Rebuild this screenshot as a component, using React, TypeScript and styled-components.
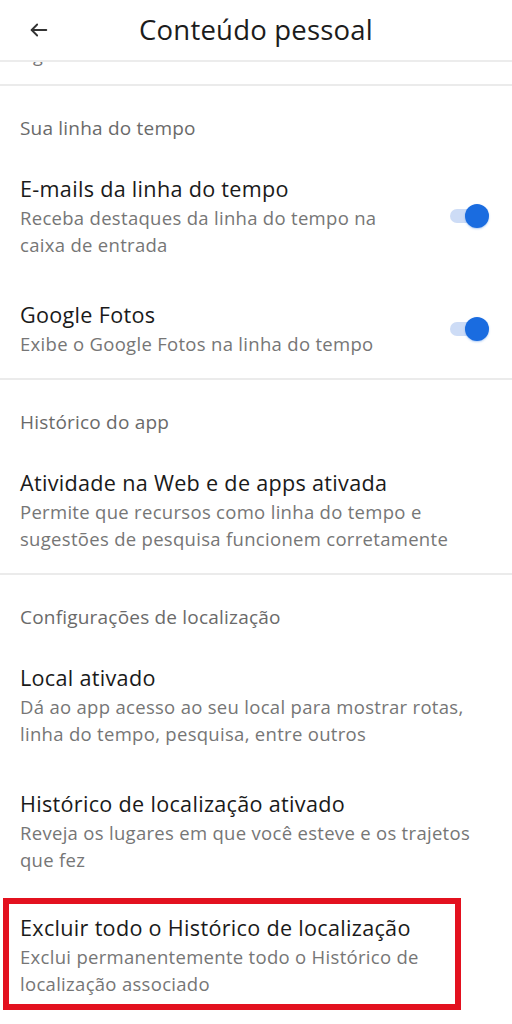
import React from 'react';
import styled, { createGlobalStyle } from 'styled-components';

const GlobalStyle = createGlobalStyle`
  html, body {
    margin: 0;
    padding: 0;
    background: #ffffff;
  }
  body {
    font-family: "Open Sans", "Noto Sans", Arial, sans-serif;
    -webkit-font-smoothing: antialiased;
  }
`;

const Page = styled.div`
  width: 512px;
  min-height: 1024px;
  background: #ffffff;
  overflow: hidden;
`;

const Header = styled.header`
  height: 60px;
  display: grid;
  grid-template-columns: 1fr auto 1fr;
  align-items: center;
  border-bottom: 2px solid #ececec;
`;

const BackButton = styled.button`
  justify-self: start;
  margin-left: 25px;
  width: 28px;
  height: 28px;
  padding: 0;
  border: none;
  background: none;
  display: flex;
  align-items: center;
  justify-content: center;
  color: #333333;
`;

const HeaderTitle = styled.h1`
  margin: 0;
  font-size: 27.5px;
  letter-spacing: 0.2px;
  font-weight: 400;
  color: #1c1c1c;
  line-height: 34px;
`;

const Remnant = styled.div`
  height: 22px;
  overflow: hidden;
`;

const RemnantText = styled.div`
  margin-top: -20px;
  padding-left: 33px;
  font-size: 18px;
  line-height: 27px;
  color: #767676;
`;

const Divider = styled.div`
  height: 2px;
  background: #ebebeb;
`;

const Section = styled.section`
  display: flex;
  flex-direction: column;
`;

const SectionLabel = styled.div`
  padding: 29px 20px 12px;
  font-size: 19px;
  letter-spacing: 0.2px;
  line-height: 26px;
  color: #6a6a6a;
`;

const Item = styled.div<{ $highlight?: boolean }>`
  display: flex;
  align-items: center;
  gap: 16px;
  padding: ${p => (p.$highlight ? '9px 0 7px 11px' : '21px 23px 21px 20px')};
  ${p =>
    p.$highlight &&
    `
    margin: 4px 0 0 3px;
    width: 435px;
    border: 6px solid #e3111f;
  `}
`;

const ItemText = styled.div`
  flex: 1;
  min-width: 0;
`;

const ItemTitle = styled.div`
  font-size: 21.6px;
  letter-spacing: 0.3px;
  line-height: 30px;
  color: #1a1a1a;
  white-space: nowrap;
`;

const ItemSub = styled.div`
  font-size: 18.5px;
  letter-spacing: 0.3px;
  line-height: 27px;
  color: #767676;
  white-space: nowrap;
`;

const Toggle = styled.div`
  position: relative;
  width: 39px;
  height: 24px;
  flex-shrink: 0;
`;

const Track = styled.div`
  position: absolute;
  left: 0;
  top: 5px;
  width: 36px;
  height: 14px;
  border-radius: 7px;
  background: #cddcf6;
`;

const Knob = styled.div`
  position: absolute;
  right: 0;
  top: 0;
  width: 24px;
  height: 24px;
  border-radius: 50%;
  background: #1a6ce0;
  box-shadow: 0 1px 2px rgba(26, 108, 224, 0.35);
`;

const BackArrow = () => (
  <svg width="22" height="22" viewBox="0 0 24 24" fill="none" stroke="currentColor" strokeWidth="2" strokeLinecap="round" strokeLinejoin="round">
    <path d="M20 12H4" />
    <path d="M10 6l-6 6 6 6" />
  </svg>
);

interface Setting {
  title: string;
  lines: string[];
  toggle?: boolean;
  highlight?: boolean;
}

interface Group {
  label: string;
  items: Setting[];
}

const groups: Group[] = [
  {
    label: 'Sua linha do tempo',
    items: [
      {
        title: 'E-mails da linha do tempo',
        lines: ['Receba destaques da linha do tempo na', 'caixa de entrada'],
        toggle: true,
      },
      {
        title: 'Google Fotos',
        lines: ['Exibe o Google Fotos na linha do tempo'],
        toggle: true,
      },
    ],
  },
  {
    label: 'Histórico do app',
    items: [
      {
        title: 'Atividade na Web e de apps ativada',
        lines: ['Permite que recursos como linha do tempo e', 'sugestões de pesquisa funcionem corretamente'],
      },
    ],
  },
  {
    label: 'Configurações de localização',
    items: [
      {
        title: 'Local ativado',
        lines: ['Dá ao app acesso ao seu local para mostrar rotas,', 'linha do tempo, pesquisa, entre outros'],
      },
      {
        title: 'Histórico de localização ativado',
        lines: ['Reveja os lugares em que você esteve e os trajetos', 'que fez'],
      },
      {
        title: 'Excluir todo o Histórico de localização',
        lines: ['Exclui permanentemente todo o Histórico de', 'localização associado'],
        highlight: true,
      },
    ],
  },
];

const App: React.FC = () => {
  return (
    <>
      <GlobalStyle />
      <Page>
        <Header>
          <BackButton aria-label="Voltar">
            <BackArrow />
          </BackButton>
          <HeaderTitle>Conteúdo pessoal</HeaderTitle>
          <span />
        </Header>
        <Remnant>
          <RemnantText>g</RemnantText>
        </Remnant>
        {groups.map(group => (
          <React.Fragment key={group.label}>
            <Divider />
            <Section>
              <SectionLabel>{group.label}</SectionLabel>
              {group.items.map(item => (
                <Item key={item.title} $highlight={item.highlight}>
                  <ItemText>
                    <ItemTitle>{item.title}</ItemTitle>
                    {item.lines.map(line => (
                      <ItemSub key={line}>{line}</ItemSub>
                    ))}
                  </ItemText>
                  {item.toggle && (
                    <Toggle>
                      <Track />
                      <Knob />
                    </Toggle>
                  )}
                </Item>
              ))}
            </Section>
          </React.Fragment>
        ))}
      </Page>
    </>
  );
};

export default App;
